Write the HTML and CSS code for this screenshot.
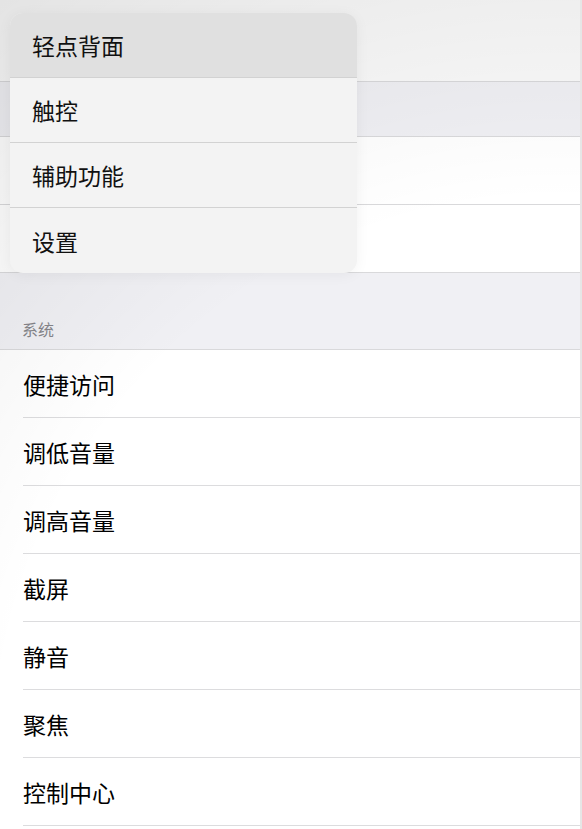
FILE: index.html
```html
<!DOCTYPE html>
<html lang="zh-CN">
<head>
<meta charset="utf-8">
<title>轻点背面</title>
<link rel="stylesheet" href="styles.css">
</head>
<body>
<div class="screen">
  <div class="navbar"></div>
  <div class="band band-top"></div>
  <div class="group">
    <div class="cell"></div>
    <div class="cell"></div>
  </div>
  <div class="band band-header"><span class="header-text">系统</span></div>
  <div class="list">
    <div class="row"><span class="label">便捷访问</span></div>
    <div class="row"><span class="label">调低音量</span></div>
    <div class="row"><span class="label">调高音量</span></div>
    <div class="row"><span class="label">截屏</span></div>
    <div class="row"><span class="label">静音</span></div>
    <div class="row"><span class="label">聚焦</span></div>
    <div class="row"><span class="label">控制中心</span></div>
  </div>
  <div class="shade"></div>
  <div class="menu">
    <div class="menu-item active">轻点背面</div>
    <div class="menu-item">触控</div>
    <div class="menu-item">辅助功能</div>
    <div class="menu-item">设置</div>
  </div>
</div>
</body>
</html>
```
FILE: styles.css
```css
html, body {
  margin: 0;
  padding: 0;
  background: #e6e6e6;
}
body {
  font-family: "Noto Sans CJK SC", "Noto Sans", sans-serif;
  color: #000;
}
.screen {
  position: relative;
  width: 580px;
  height: 829px;
  overflow: hidden;
  background: #ffffff;
}
.navbar {
  height: 81px;
  background: #fafafa;
  border-bottom: 1px solid #d9d9db;
}
.band {
  background: #f0f0f4;
}
.band-top {
  height: 54px;
  border-bottom: 1px solid #d9d9db;
}
.group .cell {
  height: 67px;
  background: #ffffff;
  border-bottom: 1px solid #d9d9db;
}
.band-header {
  height: 77px;
  display: flex;
  align-items: flex-end;
  padding: 0 0 10px 22px;
  box-sizing: border-box;
  border-bottom: 1px solid #d9d9db;
}
.header-text {
  font-size: 16px;
  line-height: 20px;
  color: #85858a;
}
.list {
  background: #ffffff;
}
.row {
  height: 68px;
  margin-left: 23px;
  border-bottom: 1px solid #dcdcde;
  display: flex;
  align-items: center;
  box-sizing: border-box;
}
.label {
  font-size: 23px;
  line-height: 30px;
  color: #000;
}
.shade {
  position: absolute;
  inset: 0;
  pointer-events: none;
  background: radial-gradient(circle at 560px 760px, rgba(0,0,0,0) 560px, rgba(0,0,0,0.09) 950px);
}
.menu {
  position: absolute;
  left: 10px;
  top: 13px;
  width: 347px;
  border-radius: 13px;
  overflow: hidden;
  background: #f3f3f3;
  box-shadow: 0 2px 14px rgba(0,0,0,0.05);
}
.menu-item {
  height: 65px;
  box-sizing: border-box;
  display: flex;
  align-items: center;
  padding-left: 22px;
  font-size: 23px;
  color: #111;
  border-bottom: 1px solid #d2d2d2;
}
.menu-item:last-child {
  border-bottom: none;
}
.menu-item.active {
  background: #e0e0e0;
}
```
